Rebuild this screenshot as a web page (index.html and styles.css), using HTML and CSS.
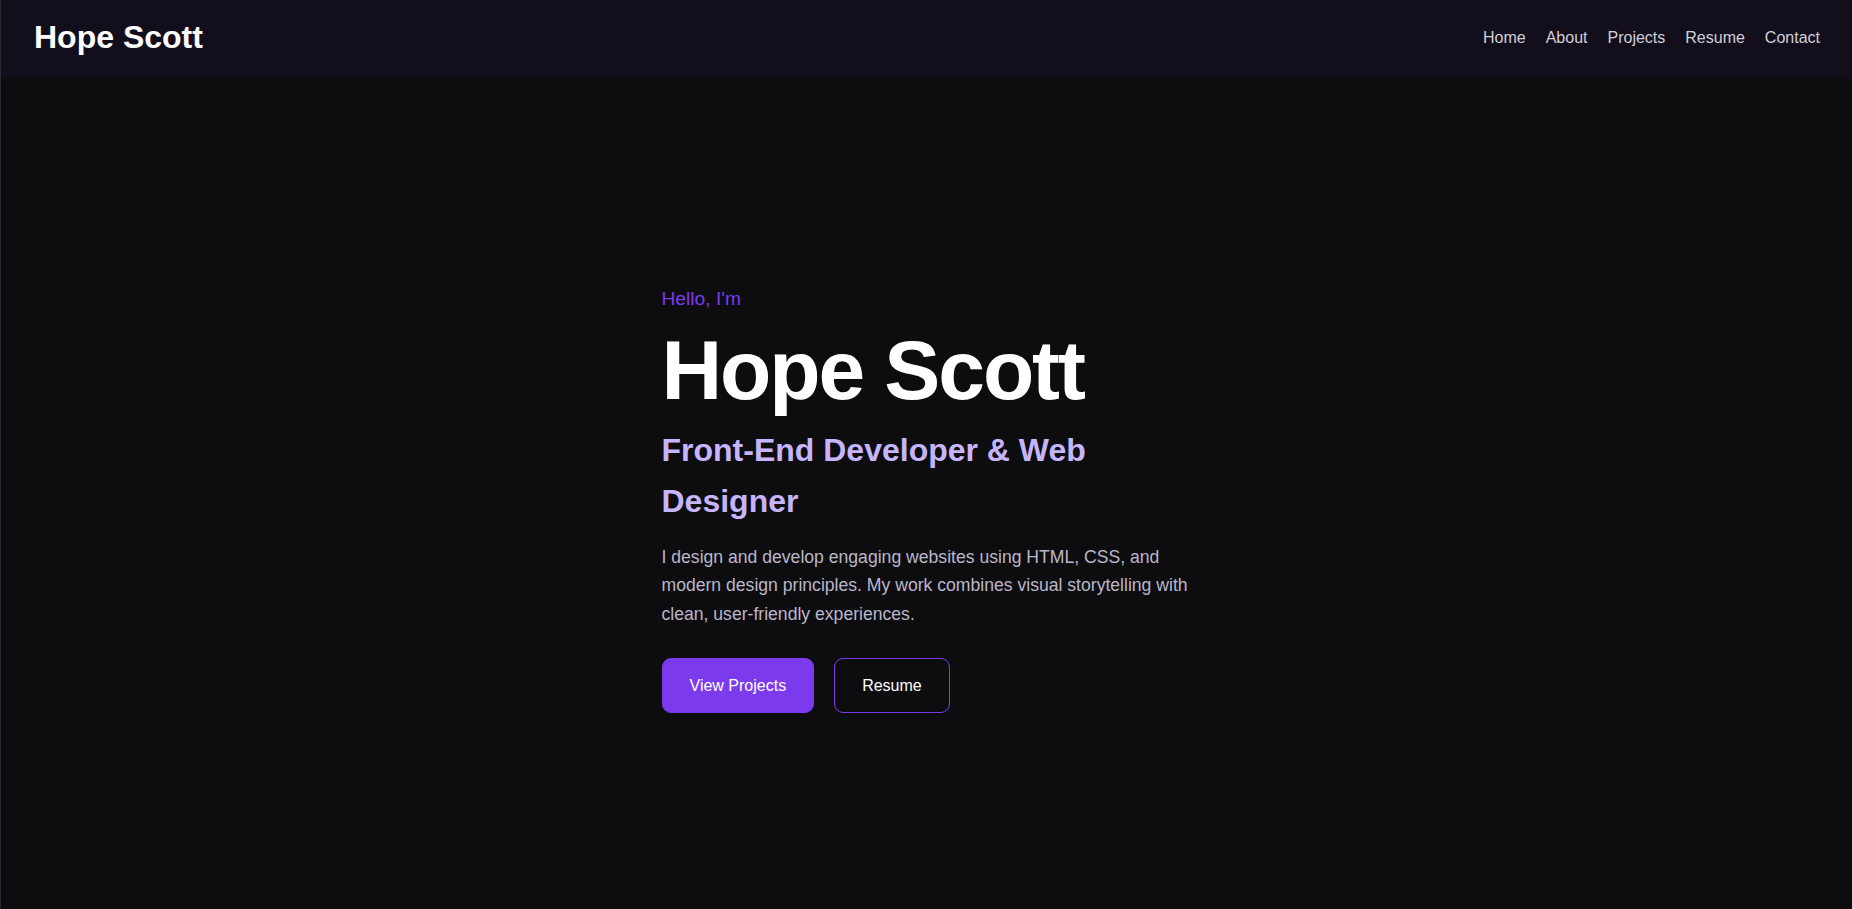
FILE: index.html
```html
<!DOCTYPE html>
<html lang="en">
<head>
<meta charset="utf-8">
<title>Hope Scott</title>
<link rel="stylesheet" href="styles.css">
</head>
<body>
<header class="site-header">
  <a class="logo" href="#">Hope Scott</a>
  <nav class="nav">
    <a href="#">Home</a>
    <a href="#">About</a>
    <a href="#">Projects</a>
    <a href="#">Resume</a>
    <a href="#">Contact</a>
  </nav>
</header>
<main class="hero">
  <div class="hero-content">
    <p class="hello">Hello, I'm</p>
    <h1 class="name">Hope Scott</h1>
    <h2 class="role">Front-End Developer &amp; Web Designer</h2>
    <p class="intro">I design and develop engaging websites using HTML, CSS, and modern design principles. My work combines visual storytelling with clean, user-friendly experiences.</p>
    <div class="actions">
      <a class="btn btn-primary" href="#">View Projects</a>
      <a class="btn btn-outline" href="#">Resume</a>
    </div>
  </div>
</main>
</body>
</html>
```
FILE: styles.css
```css
* { box-sizing: border-box; }

html, body { height: 100%; }

body {
  margin: 0;
  background: #0d0d10;
  color: #ffffff;
  font-family: "Liberation Sans", Arial, Helvetica, sans-serif;
  line-height: 1.6;
  border-left: 1px solid #2a2a2f;
  overflow: hidden;
}

a { text-decoration: none; color: inherit; }

.site-header {
  display: flex;
  justify-content: space-between;
  align-items: center;
  height: 78px;
  padding: 0 32px 4px 33px;
  background: #130e1c;
}

.logo {
  font-size: 32px;
  font-weight: 700;
  line-height: normal;
  color: #ffffff;
}

.nav {
  display: flex;
  gap: 20px;
  margin-top: 2px;
  font-size: 16px;
  color: #d2ced8;
}

.hero {
  display: flex;
  justify-content: center;
  align-items: center;
  min-height: calc(100vh - 78px);
  padding-top: 10px;
}

.hero-content {
  width: 530px;
}

.hello {
  margin: 0 0 10px;
  font-size: 19.2px;
  color: #7c3aed;
}

.name {
  margin: 0 0 8px;
  font-size: 84px;
  font-weight: 700;
  line-height: 1.1;
  letter-spacing: -0.025em;
  color: #ffffff;
}

.role {
  margin: 0;
  font-size: 32px;
  font-weight: 700;
  line-height: 1.6;
  color: #c6b5fc;
}

.intro {
  margin: 16px 0 0;
  font-size: 17.6px;
  line-height: 1.6;
  color: #bbb6c9;
}

.actions {
  display: flex;
  gap: 20px;
  margin-top: 30px;
}

.btn {
  display: inline-block;
  padding: 14px 27px;
  font-size: 16px;
  line-height: 25.6px;
  border: 1px solid #7c3aed;
  border-radius: 9px;
  color: #ffffff;
}

.btn-primary {
  background: #7c3aed;
}

.btn-outline {
  background: transparent;
}
```
